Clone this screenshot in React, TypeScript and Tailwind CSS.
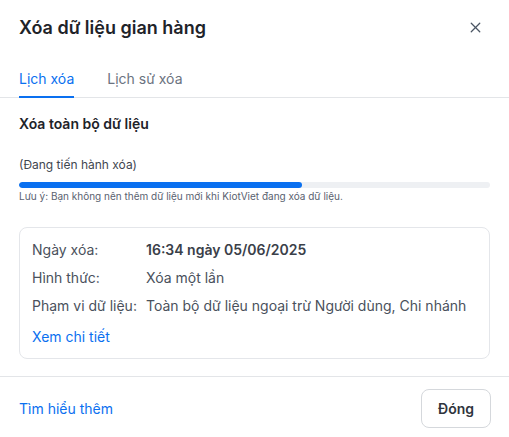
import { X } from "lucide-react";

const font = { fontFamily: "Inter, 'Noto Sans', sans-serif" };

const rows = [
  { label: "Ngày xóa:", value: "16:34 ngày 05/06/2025", bold: true },
  { label: "Hình thức:", value: "Xóa một lần" },
  { label: "Phạm vi dữ liệu:", value: "Toàn bộ dữ liệu ngoại trừ Người dùng, Chi nhánh" },
];

export default function App() {
  return (
    <div className="w-[509px] h-[437px] bg-white flex flex-col overflow-hidden" style={font}>
      {/* Header */}
      <div className="h-[54px] flex items-center justify-between pl-[19px] pr-[25px]">
        <h1 className="text-[18px] font-semibold text-[#1e2329]">Xóa dữ liệu gian hàng</h1>
        <X size={17} strokeWidth={1.8} className="text-[#4b5563]" />
      </div>

      {/* Tabs */}
      <div className="flex gap-[33px] px-[19px] border-b border-[#e3e5e8]">
        <div className="pt-[15px] pb-[6px] -mb-px border-b-2 border-[#0a70f0] text-[14px] leading-5 text-[#0a70f0]">
          Lịch xóa
        </div>
        <div className="pt-[15px] pb-[8px] text-[14px] leading-5 text-[#6b7380]">Lịch sử xóa</div>
      </div>

      {/* Body */}
      <div className="px-[19px] pt-[16px] flex flex-col">
        <div className="text-[14px] leading-5 font-semibold text-[#1e2329]">Xóa toàn bộ dữ liệu</div>
        <div className="mt-[23px] text-[12px] leading-4 text-[#3f4650]">(Đang tiến hành xóa)</div>
        <div className="mt-[9px] h-[6px] rounded-full bg-[#eef0f3] overflow-hidden">
          <div className="h-full rounded-full bg-[#0a70f0]" style={{ width: "60%" }} />
        </div>
        <div className="mt-[1px] text-[10px] leading-[14px] text-[#5a6270]">
          Lưu ý: Bạn không nên thêm dữ liệu mới khi KiotViet đang xóa dữ liệu.
        </div>

        {/* Info card */}
        <div className="mt-[24px] border border-[#e4e6ea] rounded-lg px-[12px] pt-[12px] pb-[11px] flex flex-col gap-2">
          {rows.map((r) => (
            <div key={r.label} className="grid grid-cols-[114px_1fr] text-[14px] leading-5 text-[#4a515c]">
              <span>{r.label}</span>
              <span className={r.bold ? "font-semibold text-[#3a4049]" : ""}>{r.value}</span>
            </div>
          ))}
          <a className="mt-[3px] text-[14px] leading-5 text-[#0a70f0]">Xem chi tiết</a>
        </div>
      </div>

      {/* Footer */}
      <div className="mt-[17px] border-t border-[#e3e5e8] px-[18px] pt-[12px] flex items-center justify-between">
        <a className="text-[14px] leading-5 text-[#0a70f0] pl-px">Tìm hiểu thêm</a>
        <button className="h-[39px] w-[70px] rounded-lg border border-[#d5d8dc] text-[14px] font-semibold text-[#2f353d]">
          Đóng
        </button>
      </div>
    </div>
  );
}
